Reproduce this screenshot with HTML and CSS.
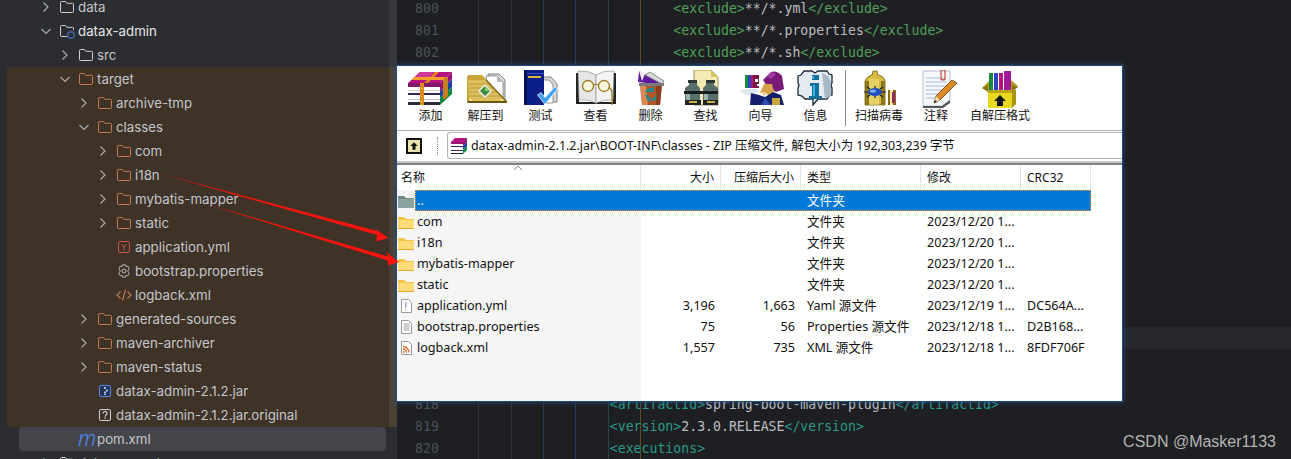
FILE: index.html
```html
<!DOCTYPE html>
<html lang="zh-CN">
<head>
<meta charset="utf-8">
<title>datax-admin</title>
<link rel="stylesheet" href="styles.css">
</head>
<body>
<svg class="sprite" aria-hidden="true">
  <symbol id="chev-r" viewBox="0 0 16 16"><path d="M5.5 3.5 10 8l-4.500 4.500" fill="none" stroke="currentColor" stroke-width="1.200"/></symbol>
  <symbol id="chev-d" viewBox="0 0 16 16"><path d="M3.500 6 8 10.500 12.500 6" fill="none" stroke="currentColor" stroke-width="1.200"/></symbol>
  <symbol id="folder" viewBox="0 0 16 16"><path d="M1.500 3.500a1 1 0 0 1 1-1h3.700l1.800 1.800h5.500a1 1 0 0 1 1 1v7.200a1 1 0 0 1-1 1h-11a1 1 0 0 1-1-1z" fill="none" stroke="currentColor"/></symbol>
  <symbol id="module" viewBox="0 0 16 16"><path d="M8 13.500H2.500a1 1 0 0 1-1-1v-9a1 1 0 0 1 1-1h3.700l1.800 1.800h5.500a1 1 0 0 1 1 1V7" fill="none" stroke="#ced0d6"/><rect x="9" y="9" width="6" height="6" rx="1.500" fill="#2b2d30" stroke="#548af7"/></symbol>
  <symbol id="yml" viewBox="0 0 16 16"><rect x="2.500" y="2.500" width="11" height="11" rx="1.500" fill="none" stroke="#c75450"/><path d="M5.500 5 8 8.200 10.500 5M8 8.200V11.500" fill="none" stroke="#c75450"/></symbol>
  <symbol id="gear" viewBox="0 0 16 16"><path d="M6.500 1.800h3l.5 1.900 1.700-.6 1.600 2.600-1.300 1.300v1.900l1.300 1.300-1.600 2.600-1.700-.6-.5 1.900h-3l-.5-1.900-1.700.6-1.600-2.600L4 8.900V7L2.700 5.700l1.600-2.600 1.700.6z" fill="none" stroke="#b4b8bf"/><circle cx="8" cy="8" r="2" fill="none" stroke="#b4b8bf"/></symbol>
  <symbol id="xml" viewBox="0 0 16 16"><path d="M4.500 4.500 1 8l3.500 3.500M11.500 4.500 15 8l-3.500 3.500M9.500 2.500l-3 11" fill="none" stroke="#c77d55" stroke-width="1.100"/></symbol>
  <symbol id="jar" viewBox="0 0 16 16"><rect x="2.500" y="2.500" width="11" height="11" rx="1.500" fill="#25324d" stroke="#548af7"/><path d="M7 4h2v2H7zM9 6.500h2v2H9zM7 8.500h2v2H7zM9 11h-2v1h2z" fill="#a8c4fb"/></symbol>
  <symbol id="unknown" viewBox="0 0 16 16"><rect x="2.500" y="2.500" width="11" height="11" rx="1.500" fill="none" stroke="#ced0d6"/><path d="M6 6.500a2 2 0 1 1 3 1.700c-.7.400-1 .8-1 1.500" fill="none" stroke="#ced0d6" stroke-width="1.200"/><rect x="7.400" y="10.600" width="1.200" height="1.300" fill="#ced0d6"/></symbol>
  <symbol id="win-folder" viewBox="0 0 18 16"><path d="M1 3h6l2 2h8v10H1z" fill="#f6c445"/><path d="M1 6h16v9H1z" fill="#fddc79"/><path d="M1 14h16v1H1z" fill="#e4a92c"/></symbol>
  <symbol id="win-folder-up" viewBox="0 0 18 16"><path d="M1 3h6l2 2h8v10H1z" fill="#6d8a86"/><path d="M1 6h16v9H1z" fill="#8aa39e"/></symbol>
  <symbol id="win-yml" viewBox="0 0 18 16"><path d="M4.500 1.500h7l3 3v10h-10z" fill="#fff" stroke="#9a9a9a"/><path d="M9.700 4.500 9 10h-.8l.5-5.500zM8 11.500h.9v1H8z" fill="#7a4fb0"/></symbol>
  <symbol id="win-doc" viewBox="0 0 18 16"><path d="M4.500 1.500h7l3 3v10h-10z" fill="#fff" stroke="#9a9a9a"/><path d="M6.500 5h6M6.500 7h6M6.500 9h6M6.500 11h6" stroke="#a0a0a0"/></symbol>
  <symbol id="win-xml" viewBox="0 0 18 16"><path d="M4.500 1.500h7l3 3v10h-10z" fill="#fff" stroke="#9a9a9a"/><path d="M6 6.500a6 6 0 0 1 6 6M6 9a3.500 3.500 0 0 1 3.500 3.500" fill="none" stroke="#d9682a" stroke-width="1.300"/><circle cx="6.800" cy="12" r="1" fill="#d9682a"/></symbol>
  <symbol id="rar" viewBox="0 0 18 18"><path d="M1 5 5 1h12l-4 4z" fill="#b5127f"/><path d="M13 5l4-4v4l-4 4z" fill="#8a0f6f"/><path d="M13 9l4-4v4l-4 4z" fill="#1e3fae"/><path d="M13 13l4-4v4l-4 4z" fill="#0d8a3f"/><rect x="1" y="5" width="12" height="12" fill="#fff"/><path d="M1 5h12v2H1z" fill="#a01070"/><path d="M1 9h12v1H1zM1 13h12v1H1z" fill="#3b2a60"/><path d="M1 16h12v1H1z" fill="#222"/></symbol>
</svg>

<div class="screen">
  <aside class="sidebar">
    <div class="strip"></div>
    <div class="tree">
      <div class="row l0"><svg class="chev"><use href="#chev-r"/></svg><svg class="ic gray"><use href="#folder"/></svg><span>data</span></div>
      <div class="row l0 strong"><svg class="chev"><use href="#chev-d"/></svg><svg class="ic"><use href="#module"/></svg><span>datax-admin</span></div>
      <div class="row l1"><svg class="chev"><use href="#chev-r"/></svg><svg class="ic gray"><use href="#folder"/></svg><span>src</span></div>
      <div class="excluded">
        <div class="row l1"><svg class="chev"><use href="#chev-d"/></svg><svg class="ic brown"><use href="#folder"/></svg><span>target</span></div>
        <div class="row l2"><svg class="chev"><use href="#chev-r"/></svg><svg class="ic brown"><use href="#folder"/></svg><span>archive-tmp</span></div>
        <div class="row l2"><svg class="chev"><use href="#chev-d"/></svg><svg class="ic brown"><use href="#folder"/></svg><span>classes</span></div>
        <div class="row l3"><svg class="chev"><use href="#chev-r"/></svg><svg class="ic brown"><use href="#folder"/></svg><span>com</span></div>
        <div class="row l3"><svg class="chev"><use href="#chev-r"/></svg><svg class="ic brown"><use href="#folder"/></svg><span>i18n</span></div>
        <div class="row l3"><svg class="chev"><use href="#chev-r"/></svg><svg class="ic brown"><use href="#folder"/></svg><span>mybatis-mapper</span></div>
        <div class="row l3"><svg class="chev"><use href="#chev-r"/></svg><svg class="ic brown"><use href="#folder"/></svg><span>static</span></div>
        <div class="row l3"><i class="chev"></i><svg class="ic"><use href="#yml"/></svg><span>application.yml</span></div>
        <div class="row l3"><i class="chev"></i><svg class="ic"><use href="#gear"/></svg><span>bootstrap.properties</span></div>
        <div class="row l3"><i class="chev"></i><svg class="ic"><use href="#xml"/></svg><span>logback.xml</span></div>
        <div class="row l2"><svg class="chev"><use href="#chev-r"/></svg><svg class="ic brown"><use href="#folder"/></svg><span>generated-sources</span></div>
        <div class="row l2"><svg class="chev"><use href="#chev-r"/></svg><svg class="ic brown"><use href="#folder"/></svg><span>maven-archiver</span></div>
        <div class="row l2"><svg class="chev"><use href="#chev-r"/></svg><svg class="ic brown"><use href="#folder"/></svg><span>maven-status</span></div>
        <div class="row l2"><i class="chev"></i><svg class="ic"><use href="#jar"/></svg><span>datax-admin-2.1.2.jar</span></div>
        <div class="row l2"><i class="chev"></i><svg class="ic"><use href="#unknown"/></svg><span>datax-admin-2.1.2.jar.original</span></div>
      </div>
      <div class="row l1 selected"><i class="chev"></i><span class="ic maven">m</span><span>pom.xml</span></div>
      <div class="row l0"><svg class="chev"><use href="#chev-r"/></svg><svg class="ic"><use href="#module"/></svg><span>datax-executor</span></div>
    </div>
    <div class="scrollbar">
      <div class="thumb-top"></div>
      <div class="thumb-tint"></div>
    </div>
  </aside>

  <main class="editor">
    <div class="guides">
      <i class="guide g1"></i><i class="guide g2"></i><i class="guide g3"></i><i class="guide g4"></i><i class="guide g5"></i><i class="guide g6"></i>
    </div>
    <div class="line"><b>800</b><code>                            <em class="tag-g">&lt;exclude&gt;</em>**/*.yml<em class="tag-g">&lt;/exclude&gt;</em></code></div>
    <div class="line"><b>801</b><code>                            <em class="tag-g">&lt;exclude&gt;</em>**/*.properties<em class="tag-g">&lt;/exclude&gt;</em></code></div>
    <div class="line"><b>802</b><code>                            <em class="tag-g">&lt;exclude&gt;</em>**/*.sh<em class="tag-g">&lt;/exclude&gt;</em></code></div>
    <div class="line"><b>803</b><code></code></div>
    <div class="line"><b>804</b><code></code></div>
    <div class="line"><b>805</b><code></code></div>
    <div class="line"><b>806</b><code></code></div>
    <div class="line"><b>807</b><code></code></div>
    <div class="line"><b>808</b><code></code></div>
    <div class="line"><b>809</b><code></code></div>
    <div class="line"><b>810</b><code></code></div>
    <div class="line"><b>811</b><code></code></div>
    <div class="line"><b>812</b><code></code></div>
    <div class="line"><b>813</b><code></code></div>
    <div class="line"><b>814</b><code></code></div>
    <div class="line caret"><b>815</b><code></code></div>
    <div class="line"><b>816</b><code></code></div>
    <div class="line"><b>817</b><code></code></div>
    <div class="line"><b>818</b><code>                    <em class="tag-t">&lt;artifactId&gt;</em>spring-boot-maven-plugin<em class="tag-t">&lt;/artifactId&gt;</em></code></div>
    <div class="line"><b>819</b><code>                    <em class="tag-t">&lt;version&gt;</em>2.3.0.RELEASE<em class="tag-t">&lt;/version&gt;</em></code></div>
    <div class="line"><b>820</b><code>                    <em class="tag-t">&lt;executions&gt;</em></code></div>
  </main>

  <section class="winrar">
    <div class="toolbar">
      <div class="tool">
        <svg class="tool-icon" viewBox="0 0 48 38">
          <path d="M33 13 45 2v7L33 21z" fill="#9c1180"/><path d="M33 21 45 9v8L33 28z" fill="#1e3fae"/><path d="M33 28 45 17v7L33 35z" fill="#0d8a3f"/>
          <path d="M1 13 13 2h32L33 13z" fill="#b5127f"/><path d="M13 2h14l-5 5H8z" fill="#d0389a"/>
          <rect x="1" y="13" width="32" height="22" fill="#fff"/><path d="M1 13h32v4H1z" fill="#7d1a6c"/><path d="M1 20h32v1H1z" fill="#c9c9d8"/><path d="M1 23h32v2H1z" fill="#3a2a5c"/><path d="M1 29h32v1H1z" fill="#c9c9d8"/><path d="M1 32h32v3H1z" fill="#2d2a3c"/>
          <path d="M13 13h4v22h-4zM17 13 28 2h4L21 13z" fill="#e08a1a"/><path d="M4 10 8 7h31l-3 3z" fill="#f2a12a"/><path d="M36 10l3-3 2 0v19l-3 3-2 0z" fill="#c9801c"/>
          <path d="M14 18h1v1h-1zM14 26h1v1h-1zM14 31h1v1h-1z" fill="#ffe9a0"/>
        </svg>
        <span>添加</span>
      </div>
      <div class="tool">
        <svg class="tool-icon" viewBox="0 0 48 38">
          <path d="M26 4h11l6 6v20H30z" fill="#dcdcdc" stroke="#666" stroke-width=".8"/><path d="M24 6h11l6 6v19H28z" fill="#fff" stroke="#777" stroke-width=".8"/><path d="M35 6v6h6z" fill="#bbb"/>
          <path d="M5 7q0-2 2-2h13l5 5 20 22v1H7q-2 0-2-2z" fill="#c9a53a"/><path d="M6 10h19l18 21H7z" fill="#dcbe5e"/><path d="M7 14h22M7 18h25M7 22h29M7 26h32" stroke="#b08f2c" stroke-width=".7"/>
          <path d="M5 31h40v2H6z" fill="#6b5310"/><path d="M24 10 45 32" stroke="#7f6416" stroke-width="1.200"/>
          <path d="M23 14l7 7-7 7-7-7z" fill="#eee"/><path d="M23 16l5 5-5 5-5-5z" fill="#3e8a3e"/><path d="M23 16v5h5z" fill="#8fce6a"/>
          <circle cx="9" cy="30" r="1" fill="#fff3b0"/><circle cx="40" cy="30" r="1" fill="#fff3b0"/>
        </svg>
        <span>解压到</span>
      </div>
      <div class="tool">
        <svg class="tool-icon" viewBox="0 0 48 38">
          <path d="M26 7h8l6 7v18H26z" fill="#d8d8d8" stroke="#666" stroke-width=".8"/><path d="M24 10h8l4 5v18H24z" fill="#fff" stroke="#777" stroke-width=".8"/>
          <path d="M7 0h20v35H7z" fill="#0c1f88"/><path d="M7 0h3v35H7z" fill="#05105a"/><path d="M11 6h13v2H11z" fill="#d9b73a"/><path d="M10 3h17v1H10z" fill="#3048c0"/>
          <path d="M21 25l3-2 4 5 10-11 2 2-12 15z" fill="#3fa2f0" stroke="#fff" stroke-width="1.300" paint-order="stroke"/>
        </svg>
        <span>测试</span>
      </div>
      <div class="tool">
        <svg class="tool-icon" viewBox="0 0 48 38">
          <path d="M4 3h3v29h16l1 2H4zM44 3h-3v29H25l-1 2h20z" fill="#222"/>
          <path d="M6 1q10-1 18 4v28q-8-4-17-3z" fill="#e6e6e6" stroke="#888" stroke-width=".6"/><path d="M42 1q-10-1-18 4v28q8-4 17-3z" fill="#f3f3f3" stroke="#888" stroke-width=".6"/>
          <circle cx="16" cy="16" r="5.500" fill="#f7f4e0" stroke="#9a7b1c" stroke-width="1.300"/><circle cx="32" cy="16" r="5.500" fill="#f7f4e0" stroke="#9a7b1c" stroke-width="1.300"/><path d="M21 15q3-2 6 0" fill="none" stroke="#9a7b1c"/><path d="M37 17l3 4v14" fill="none" stroke="#9a7b1c" stroke-width="1.300"/>
        </svg>
        <span>查看</span>
      </div>
      <div class="tool">
        <svg class="tool-icon" viewBox="0 0 48 38">
          <path d="M13 14h22l-2 21H15z" fill="#b3552a"/><path d="M13 14h6l2 21h-6z" fill="#d98a55"/><path d="M29 14h6l-2 21h-4z" fill="#8a3e1c"/>
          <path d="M11 12 12 1l24 14z" fill="#5e1a9e"/><path d="M12 1l6 3-3 7z" fill="#efefef"/>
          <path d="M18 5l5-3 14 9-2 3z" fill="#d8d8d8" stroke="#666" stroke-width=".7"/><path d="M12 13h25v3H12z" fill="#7a7a7a"/>
          <path d="M18 23a6 6 0 0 1 7-5l2-2v6h-6zM30 23l-1 7-4 1v-3l3-1zM18 25l3 6 3 0-1-3-3-3z" fill="#1d8a8a"/>
        </svg>
        <span>删除</span>
      </div>
      <div class="tool">
        <svg class="tool-icon" viewBox="0 0 48 38">
          <path d="M12 0h17l7 7v28H12z" fill="#f5e9b4" stroke="#8a7a3a" stroke-width=".8"/><path d="M29 0v7h7z" fill="#d9c56c"/>
          <path d="M7 10h8v5l3 3v15H3V18l4-3z" fill="#56706c"/><path d="M24 10h8v5l4 3v15H21V18l3-3z" fill="#56706c"/>
          <path d="M6 10h9v3H6zM24 10h9v3h-9z" fill="#2b3635"/><path d="M3 21H2v3h17v-3zM20 21h-1v3h17v-3z" fill="#181c1c"/><path d="M3 30h16v5H3zM21 30h15v5H21z" fill="#1e2423"/><path d="M4 24h4v6H4zM22 24h4v6h-4z" fill="#9ab5ae"/><path d="M7 31h8v2H7zM25 31h8v2h-8z" fill="#c9b14a"/>
        </svg>
        <span>查找</span>
      </div>
      <div class="tool">
        <svg class="tool-icon" viewBox="0 0 48 38">
          <path d="M8 5h14v13H8z" fill="#7a1840"/><path d="M8 5h3v13H8z" fill="#1c8a3c"/><path d="M11 5h3v13h-3z" fill="#2a44c0"/><path d="M14 5h2v13h-2z" fill="#b5127f"/><path d="M18 9h3v3h-3zM20 14h2v2h-2z" fill="#fff"/>
          <path d="M2 21q8-3 18-2l1 3-11 3z" fill="#dbe6ee"/>
          <path d="M26 10 34 2q6-2 11 4l2 13-8 3-9-6z" fill="#7a1a78"/><path d="M30 6l5-4 4 2-5 5z" fill="#a03a9e"/>
          <path d="M27 14l8 0 2 8-3 5-7-5-4 1z" fill="#d9a24a"/><path d="M23 21l6 3-2 2z" fill="#e8c27a"/>
          <path d="M14 23l8 2 6 2 8-5 8 3 3 10H13z" fill="#13206e"/><path d="M35 28h8v7h-8z" fill="#c9a53a"/><path d="M28 28l6 7h-10z" fill="#2f4bb0"/>
        </svg>
        <span>向导</span>
      </div>
      <div class="tool">
        <svg class="tool-icon" viewBox="0 0 48 38">
          <path d="M12 1h8l3 2 3-2h9l2 3 3 1v8l-1 2 1 3v7l-3 1-2 3h-9l-5 6v-6h-8l-3-3-4-1v-7l1-3-1-2V6l3-1z" fill="#e4ecf2" stroke="#1c2a33" stroke-width="1.300"/>
          <path d="M30 3l6 3 3 6v14l-6 3z" fill="#a9bac6"/><path d="M20 5h7v5h-7z" fill="#136e9e"/><path d="M18 13h9v13h3v3H17v-3h3v-10h-2z" fill="#136e9e"/><path d="M20 6h2v3h-2zM21 15h2v11h-2z" fill="#36b6e6"/>
        </svg>
        <span>信息</span>
      </div>
      <i class="tool-sep"></i>
      <div class="tool tool-scan">
        <svg class="tool-icon" viewBox="0 0 48 38">
          <path d="M10 11q2-5 7-6l1-4h4l1 4q6 1 7 6v24H10z" fill="#d6b93e" stroke="#6d5a10" stroke-width=".8"/><path d="M10 11h4v24h-4zM26 11h4v24h-4z" fill="#8f7616"/><path d="M14 9h10v26H14z" fill="#f4e68a" opacity=".55"/>
          <ellipse cx="20" cy="22" rx="7" ry="4" fill="#1e4fc0"/><ellipse cx="18" cy="21" rx="3" ry="1.500" fill="#7fb0ff"/><path d="M12 17l3 2M12 27l3-2M20 16v2M20 26v2M28 17l-3 2M28 27l-3-2M13 22H9M27 22h4" stroke="#13204a" stroke-width="1.200"/>
          <path d="M33 20h8v15h-8z" fill="#8a6a18"/><path d="M35 20h3v15h-3z" fill="#f6ec9c"/><path d="M37 22h3v11h-3z" fill="#8e2a6a"/>
        </svg>
        <span>扫描病毒</span>
      </div>
      <div class="tool tool-note">
        <svg class="tool-icon" viewBox="0 0 48 38">
          <path d="M11 1h27v29l-8 6H11z" fill="#f6f8fb" stroke="#9fb2c4" stroke-width=".8"/><path d="M11 36h19l8-6v3l-7 5H11z" fill="#555"/>
          <path d="M14 8h18M14 12h21M14 16h21M14 20h18M14 24h15M14 28h12" stroke="#a3bcd8"/>
          <path d="M29 0h4v9q-2 2-4 0z" fill="none" stroke="#c93a2e" stroke-width="1.100"/>
          <path d="M22 33l2-7 16-16 5 3-17 17z" fill="#dd8a24" stroke="#5a3a0c" stroke-width=".8"/><path d="M22 33l2-7 4 4z" fill="#f3d8a8"/><path d="M22 33l1-3 2 2z" fill="#222"/>
        </svg>
        <span>注释</span>
      </div>
      <div class="tool tool-sfx">
        <svg class="tool-icon" viewBox="0 0 48 38">
          <path d="M13 3h4v18h-4z" fill="#1c8a3c"/><path d="M18 3h4v18h-4z" fill="#2a44c0"/><path d="M23 3h4v18h-4z" fill="#b5127f"/><path d="M28 1h7v20h-7z" fill="#a01a9c"/>
          <path d="M6 18l7-7v9zM42 16l-7-6v10z" fill="#b39a14"/><path d="M6 18l6 4h24l6-5-6-2v5H12v-5z" fill="#8a7610"/>
          <path d="M12 20h24v18H12z" fill="#e8d81e"/><path d="M12 20h24v3H12z" fill="#b8a612"/><path d="M36 20h4v14l-4 4z" fill="#a8940e"/><path d="M24 25l6 6h-3v5h-6v-5h-3z" fill="#111"/>
        </svg>
        <span>自解压格式</span>
      </div>
    </div>

    <div class="addressbar">
      <button class="up-btn" type="button" aria-label="up"><svg viewBox="0 0 16 16"><path d="M8 3l5 5h-3v5H6V8H3z" fill="#111"/></svg></button>
      <i class="grip"></i>
      <div class="address">
        <svg class="addr-icon"><use href="#rar"/></svg>
        <span>datax-admin-2.1.2.jar\BOOT-INF\classes - ZIP 压缩文件, 解包大小为 192,303,239 字节</span>
      </div>
    </div>

    <div class="columns">
      <div class="head">
        <div class="h-name">名称<svg class="sort" viewBox="0 0 10 6"><path d="M1 5l4-4 4 4" fill="none" stroke="#888"/></svg></div>
        <div class="right">大小</div>
        <div class="right">压缩后大小</div>
        <div>类型</div>
        <div>修改</div>
        <div>CRC32</div>
      </div>
      <div class="list">
        <div class="item"><svg class="file-ic"><use href="#win-folder-up"/></svg><div class="cells sel"><div>..</div><div></div><div></div><div>文件夹</div><div></div><div></div></div></div>
        <div class="item"><svg class="file-ic"><use href="#win-folder"/></svg><div class="cells"><div>com</div><div></div><div></div><div>文件夹</div><div>2023/12/20 1...</div><div></div></div></div>
        <div class="item"><svg class="file-ic"><use href="#win-folder"/></svg><div class="cells"><div>i18n</div><div></div><div></div><div>文件夹</div><div>2023/12/20 1...</div><div></div></div></div>
        <div class="item"><svg class="file-ic"><use href="#win-folder"/></svg><div class="cells"><div>mybatis-mapper</div><div></div><div></div><div>文件夹</div><div>2023/12/20 1...</div><div></div></div></div>
        <div class="item"><svg class="file-ic"><use href="#win-folder"/></svg><div class="cells"><div>static</div><div></div><div></div><div>文件夹</div><div>2023/12/20 1...</div><div></div></div></div>
        <div class="item"><svg class="file-ic"><use href="#win-yml"/></svg><div class="cells"><div>application.yml</div><div class="right">3,196</div><div class="right">1,663</div><div>Yaml 源文件</div><div>2023/12/19 1...</div><div>DC564A...</div></div></div>
        <div class="item"><svg class="file-ic"><use href="#win-doc"/></svg><div class="cells"><div>bootstrap.properties</div><div class="right">75</div><div class="right">56</div><div>Properties 源文件</div><div>2023/12/18 1...</div><div>D2B168...</div></div></div>
        <div class="item"><svg class="file-ic"><use href="#win-xml"/></svg><div class="cells"><div>logback.xml</div><div class="right">1,557</div><div class="right">735</div><div>XML 源文件</div><div>2023/12/18 1...</div><div>8FDF706F</div></div></div>
      </div>
    </div>
  </section>

  <svg class="arrows" viewBox="0 0 1291 459" aria-hidden="true">
    <path d="M160 173.500 377 231 374 228 388.500 238 376 241.500 377 235z" fill="#f5140f"/>
    <path d="M208 204.500 388 256.500 386 252 399 262 388 265.500 387.500 260.500z" fill="#f5140f"/>
  </svg>

  <div class="watermark">CSDN @Masker1133</div>
</div>
</body>
</html>
```
FILE: styles.css
```css
* { box-sizing: border-box; }
html, body { margin: 0; height: 100%; background: #1e1f22; overflow: hidden; }
.sprite { position: absolute; width: 0; height: 0; }

.screen {
  position: relative;
  display: flex;
  width: 1291px;
  height: 459px;
  overflow: hidden;
}

/* project tree */
.sidebar {
  display: flex;
  flex: 0 0 397px;
  background: #2b2d30;
  font: 13.300px/24px Inter, "Liberation Sans", sans-serif;
  color: #c3c6cc;
}
.strip { flex: 0 0 7px; }
.tree { flex: 1; margin-top: -5px; min-width: 0; }
.excluded { background: #3f3226; }
.row { display: flex; align-items: center; height: 24px; white-space: nowrap; }
.l0 { padding-left: 31px; }
.l1 { padding-left: 50px; }
.l2 { padding-left: 69px; }
.l3 { padding-left: 88px; }
.strong { color: #e6e8ec; }
.chev { flex: 0 0 16px; width: 16px; height: 16px; color: #a8abb2; }
.ic { flex: 0 0 16px; width: 16px; height: 16px; margin: 0 3px 0 5px; }
.gray { color: #ced0d6; }
.brown { color: #c77d55; }
.maven { font: italic 300 21px/16px "Noto Sans", sans-serif; color: #548af7; margin-top: -3px; text-align: center; }
.selected { position: relative; z-index: 0; }
.selected::before {
  content: "";
  position: absolute;
  z-index: -1;
  left: 12px;
  right: 3px;
  top: 0;
  bottom: 0;
  background: #43454a;
  border-radius: 4px;
}
.scrollbar { flex: 0 0 8px; display: flex; flex-direction: column; }
.thumb-top { flex: 0 0 67px; background: #37393d; }
.thumb-tint { flex: 0 0 360px; background: #4b4136; }

/* code editor */
.editor {
  position: relative;
  flex: 1;
  margin-top: -3px;
  background: #1e1f22;
  font: 13.200px/22px "DejaVu Sans Mono", monospace;
  color: #bcbec4;
}
.guides { position: absolute; inset: 0; }
.guide { position: absolute; top: 0; bottom: 0; width: 1px; background: #313438; }
.g1 { left: 81px; }
.g2 { left: 114px; }
.g3 { left: 146px; background: #2c3a50; }
.g4 { left: 178px; background: #2a3c66; }
.g5 { left: 211px; background: #1f4a48; }
.g6 { left: 243px; background: #5c4a22; }
.line { position: relative; display: flex; height: 22px; padding-top: 1px; white-space: pre; }
.line b { flex: 0 0 53px; padding-left: 18px; font-weight: 400; color: #4b5059; }
.line code { font: inherit; padding-left: 1px; }
.line em { font-style: normal; }
.caret { background: #26282e; }
.tag-g { color: #4ea359; }
.tag-t { color: #2a9a8a; }

/* archive window */
.winrar {
  position: absolute;
  left: 397px;
  top: 66px;
  width: 725px;
  height: 335px;
  display: flex;
  flex-direction: column;
  background: #fff;
  color: #111;
  font: 12px/16px "Noto Sans", "Noto Sans CJK SC", sans-serif;
  box-shadow: 0 0 0 1px #1d4a80, 0 0 5px 2px rgba(40, 90, 160, .45);
}
.toolbar {
  display: flex;
  flex: 0 0 65px;
  padding: 4px 0 0 6px;
  border-bottom: 1px solid #b0b0b0;
  font-family: "Noto Sans CJK SC", sans-serif;
}
.tool { flex: 0 0 55px; display: flex; flex-direction: column; align-items: center; }
.tool span { margin-top: -1px; }
.tool-icon { width: 48px; height: 38px; flex: none; }
.tool-sep { flex: 0 0 1px; height: 56px; margin: 0 2px 0 2px; background: #8a8a8a; }
.tool-scan { flex-basis: 62px; }
.tool-note { flex-basis: 52px; }
.tool-sfx { flex-basis: 76px; }

.addressbar {
  display: flex;
  align-items: center;
  flex: 0 0 34px;
  padding-bottom: 3px;
  border-bottom: 2px solid #808080;
  box-shadow: inset 0 -2px 0 #c8c8c8;
}
.up-btn {
  width: 16px;
  height: 16px;
  margin-left: 9px;
  padding: 0;
  border: 2px solid #111;
  background: #eae3ae;
  display: flex;
}
.up-btn svg { width: 12px; height: 12px; }
.grip { width: 1px; height: 18px; margin-left: 15px; border-left: 1px dotted #888; }
.address {
  display: flex;
  align-items: center;
  gap: 3px;
  flex: 1;
  height: 27px;
  margin-left: 9px;
  padding: 1px 0 0 2px;
  border: 1px solid #b5b5b5;
  border-right: 0;
  border-radius: 3px 0 0 3px;
  white-space: nowrap;
  font-size: 12.400px;
}
.addr-icon { width: 18px; height: 18px; flex: none; }

.columns { flex: 1; display: flex; flex-direction: column; min-height: 0; font-size: 12.600px; }
.head {
  display: grid;
  grid-template-columns: 244px 80px 80px 120px 100px 70px;
  grid-template-rows: 25px;
  flex: 0 0 25px;
  height: 25px;
  overflow: hidden;
  font-size: 12px;
  line-height: 26px;
}
.head > div { padding: 0 6px; border-right: 1px solid #e5e5e5; white-space: nowrap; }
.h-name { position: relative; padding-left: 4px !important; }
.sort { position: absolute; left: 116px; top: 0; width: 10px; height: 6px; }
.list { flex: 1; background: linear-gradient(90deg, #f5f5f5 244px, #fff 244px); }
.item { display: flex; height: 21px; line-height: 21px; width: 694px; }
.file-ic { flex: 0 0 18px; width: 18px; height: 16px; margin-top: 3px; }
.cells { display: grid; grid-template-columns: 226px 80px 80px 120px 100px 70px; flex: none; }
.cells > div { padding: 0 6px; white-space: nowrap; overflow: hidden; }
.cells > div:first-child { padding-left: 2px; }
.right { text-align: right; }
.sel { background: #0078d7; color: #fff; outline: 1px dotted #f0912a; outline-offset: -1px; }

.arrows { position: absolute; inset: 0; width: 1291px; height: 459px; pointer-events: none; }
.watermark {
  position: absolute;
  right: 15px;
  top: 433px;
  font: 16px/18px "Liberation Sans", sans-serif;
  color: #b4b4b4;
}
```
